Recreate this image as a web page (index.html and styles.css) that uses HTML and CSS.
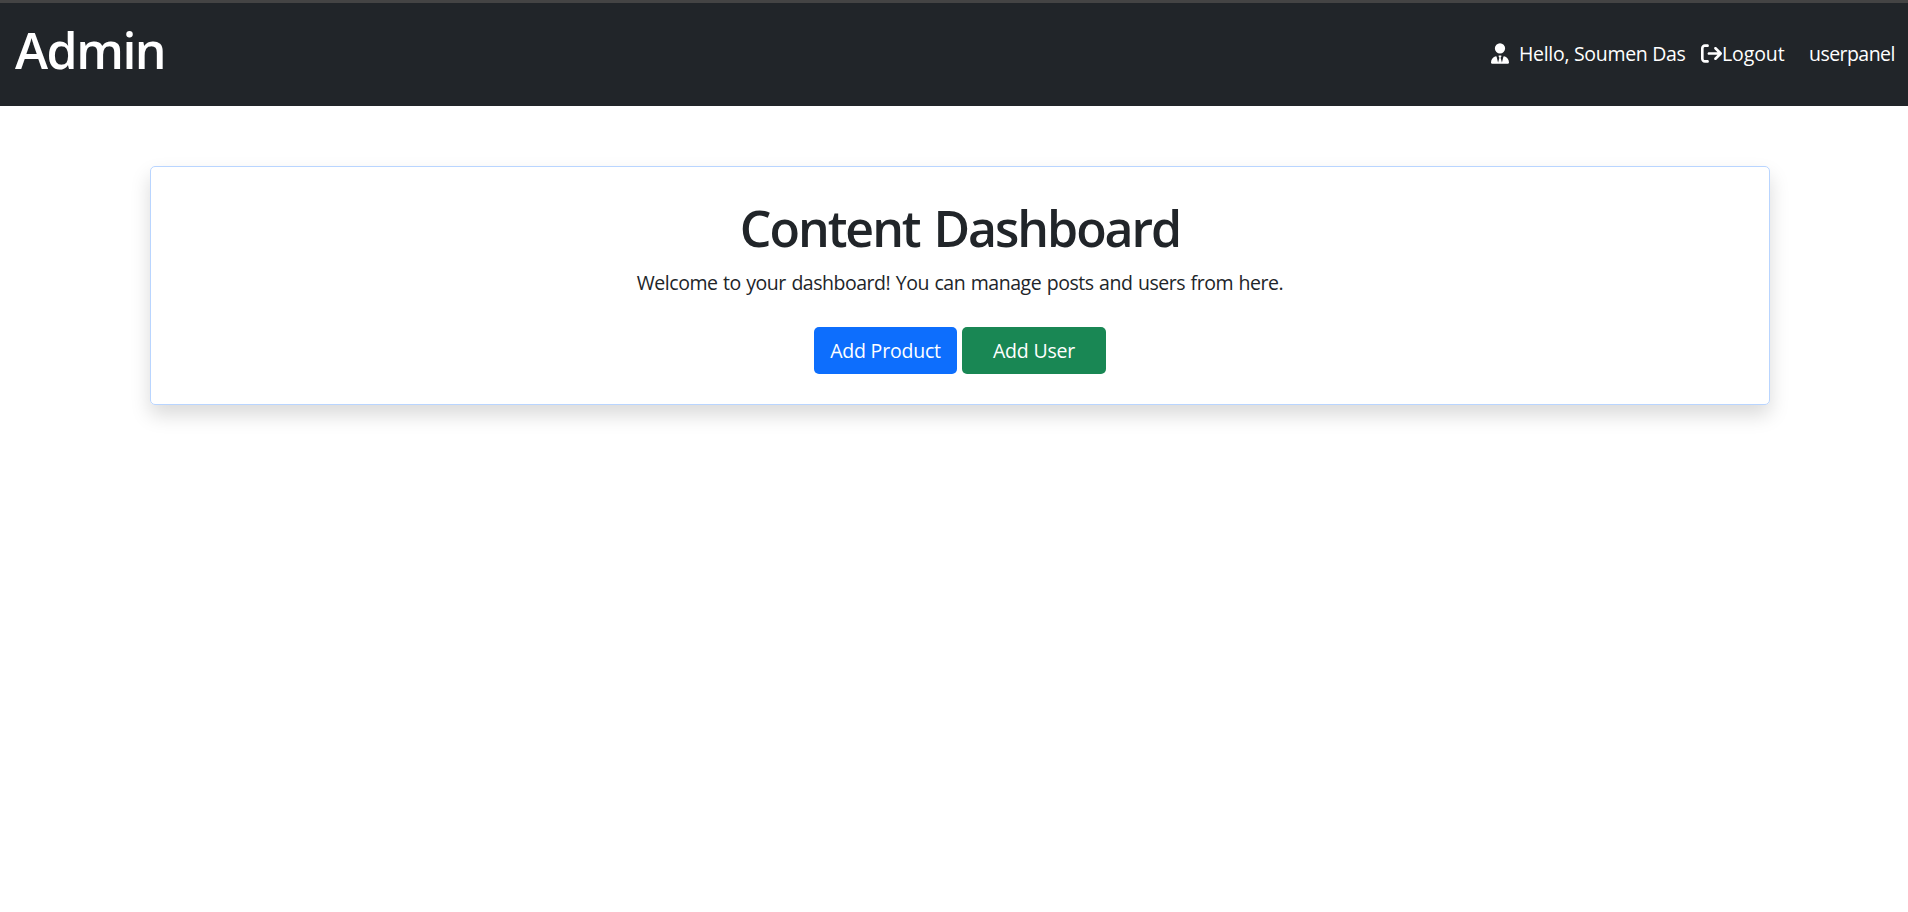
FILE: index.html
```html
<!DOCTYPE html>
<html lang="en">
<head>
<meta charset="utf-8">
<title>Admin</title>
<link rel="stylesheet" href="styles.css">
</head>
<body>
<nav class="navbar">
  <h1 class="brand"><span>Admin</span></h1>
  <div class="nav-links">
    <svg class="icon-user" viewBox="0 0 448 512"><path d="M96 128a128 128 0 1 0 256 0A128 128 0 1 0 96 128zm94.500 200.200l18.600 31L175.800 483.100l-36-146.900c-2-8.100-9.800-13.400-17.900-11.300C51.900 342.400 0 405.800 0 481.300c0 17 13.800 30.700 30.700 30.700l131.700 0 5.600 0 112 0 5.600 0 131.700 0c17 0 30.700-13.800 30.700-30.700c0-75.500-51.900-138.900-121.900-156.400c-8.100-2-15.900 3.300-17.900 11.300l-36 146.900L238.900 359.200l18.600-31c6.400-10.700-1.300-24.200-13.700-24.200L224 304l-19.700 0c-12.400 0-20.100 13.600-13.700 24.200z"/></svg>
    <span class="hello">Hello, Soumen Das</span>
    <a class="logout" href="#"><svg class="icon-logout" viewBox="0 0 512 512"><path d="M502.600 278.600c12.500-12.500 12.500-32.800 0-45.300l-128-128c-12.500-12.500-32.800-12.500-45.300 0s-12.500 32.800 0 45.300L402.700 224 192 224c-17.700 0-32 14.300-32 32s14.300 32 32 32l210.700 0-73.400 73.400c-12.500 12.500-12.500 32.800 0 45.300s32.800 12.500 45.300 0l128-128zM160 96c17.700 0 32-14.300 32-32s-14.300-32-32-32L96 32C43 32 0 75 0 128L0 384c0 53 43 96 96 96l64 0c17.700 0 32-14.300 32-32s-14.300-32-32-32l-64 0c-17.700 0-32-14.300-32-32l0-256c0-17.700 14.300-32 32-32l64 0z"/></svg><span>Logout</span></a>
    <a class="userpanel" href="#">userpanel</a>
  </div>
</nav>
<main class="card">
  <h1 class="title">Content Dashboard</h1>
  <p class="welcome">Welcome to your dashboard! You can manage posts and users from here.</p>
  <div class="actions">
    <a class="btn btn-primary" href="#">Add Product</a>
    <a class="btn btn-success" href="#">Add User</a>
  </div>
</main>
</body>
</html>
```
FILE: styles.css
```css
* { box-sizing: border-box; }
body {
  margin: 0;
  min-height: 100vh;
  background: #fff;
  color: #212529;
  font: 400 19.5px/30px "Segoe UI", "Open Sans", "Noto Sans", sans-serif;
}
a { color: inherit; text-decoration: none; }
h1, p { margin: 0; }
.navbar {
  display: flex;
  justify-content: space-between;
  height: 106px;
  padding: 17px 14px 0 15px;
  border-top: 3px solid #444;
  background: #212529;
  color: #fff;
}
.brand, .title { font-size: 50px; font-weight: 600; line-height: 60px; }
.brand { letter-spacing: -1.5px; }
.nav-links { display: flex; align-items: center; height: 68px; white-space: nowrap; }
.nav-links svg { fill: #fff; flex: none; margin-bottom: 1px; }
.icon-user { width: 18px; height: 21px; margin-right: 10px; }
.icon-logout { width: 21px; height: 21px; }
.hello { width: 182px; letter-spacing: -.3px; }
.logout { display: flex; align-items: center; width: 108px; letter-spacing: -.1px; }
.userpanel { width: 85px; letter-spacing: -.55px; }
.card {
  display: flex;
  flex-direction: column;
  align-items: center;
  width: 1620px;
  height: 239px;
  margin: 60px 0 0 150px;
  padding-top: 31px;
  border: 1px solid #b9d5ff;
  border-radius: 5px;
  box-shadow: 0 10px 20px rgba(0, 0, 0, .15);
  white-space: nowrap;
}
.title { letter-spacing: -2.05px; word-spacing: 3px; }
.welcome { margin-top: 10px; letter-spacing: -.48px; word-spacing: 1px; }
.actions { display: flex; gap: 5px; margin-top: 29px; }
.btn {
  display: flex;
  align-items: center;
  justify-content: center;
  width: 143px;
  height: 47px;
  border-radius: 5px;
  color: #fff;
  letter-spacing: -.2px;
}
.btn-primary { background: #0d6efd; }
.btn-success { width: 144px; background: #198754; }
```
